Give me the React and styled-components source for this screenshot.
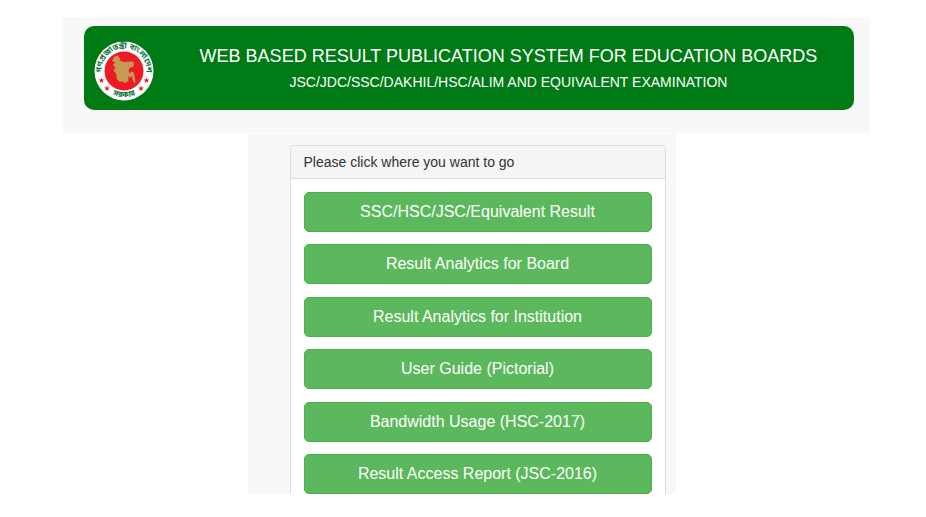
import styled, { createGlobalStyle } from 'styled-components';

const links = [
    'SSC/HSC/JSC/Equivalent Result',
    'Result Analytics for Board',
    'Result Analytics for Institution',
    'User Guide (Pictorial)',
    'Bandwidth Usage (HSC-2017)',
    'Result Access Report (JSC-2016)',
];

const stars = [
    [15, 79],
    [26, 95],
    [94, 95],
    [105, 79],
];

const Star = ({ x, y }) => (
    <path
        transform={`translate(${x} ${y})`}
        fill="#ed1c24"
        d="M0 -6 L1.5 -2 L5.7 -1.9 L2.4 0.8 L3.5 4.9 L0 2.5 L-3.5 4.9 L-2.4 0.8 L-5.7 -1.9 L-1.5 -2 Z"
    />
);

const Seal = () => (
    <SealIcon viewBox="0 0 120 120" role="img" aria-label="Government seal">
        <defs>
            <path id="seal-top" d="M18 76 A45 45 0 1 1 102 76" />
            <path id="seal-bottom" d="M14 86 A53 53 0 0 0 106 86" />
        </defs>
        <circle cx="60" cy="60" r="59" fill="#fff" />
        <circle cx="60" cy="60" r="39" fill="#ed1c24" />
        <path
            fill="#c49a55"
            d="M41 31 L48 29 L51 34 L53 40 L60 42 L78 41 L80 45 L79 51 L71 54 L69 59 L72 65 L75 61 L79 62 L82 75 L83 85 L79 82 L75 70 L71 74 L68 70 L69 80 L61 84 L56 80 L52 82 L46 77 L44 65 L39 59 L43 54 L38 47 L43 43 L36 40 Z"
        />
        <SealText>
            <textPath href="#seal-top" startOffset="50%" textAnchor="middle">গণপ্রজাতন্ত্রী বাংলাদেশ</textPath>
        </SealText>
        <SealText>
            <textPath href="#seal-bottom" startOffset="50%" textAnchor="middle">সরকার</textPath>
        </SealText>
        {stars.map(([x, y]) => (
            <Star key={x} x={x} y={y} />
        ))}
    </SealIcon>
);

const App = () => {
    return (
        <Page>
            <GlobalStyle />
            <Header>
                <Banner>
                    <Seal />
                    <Titles>
                        <Title>WEB BASED RESULT PUBLICATION SYSTEM FOR EDUCATION BOARDS</Title>
                        <Subtitle>JSC/JDC/SSC/DAKHIL/HSC/ALIM AND EQUIVALENT EXAMINATION</Subtitle>
                    </Titles>
                </Banner>
            </Header>
            <Content>
                <Panel>
                    <PanelHeading>Please click where you want to go</PanelHeading>
                    <LinkList>
                        {links.map((label) => (
                            <LinkButton key={label} href="#">{label}</LinkButton>
                        ))}
                    </LinkList>
                </Panel>
            </Content>
        </Page>
    )
}

const GlobalStyle = createGlobalStyle`
    * {
        box-sizing: border-box;
    }
    body {
        margin: 0;
        background: #fff;
        font-family: "Liberation Sans", Arial, sans-serif;
    }
`

const Page = styled.div`
    display: flex;
    flex-direction: column;
    gap: 1px;
    padding: 17px 56px 23px 63px;
`

const Header = styled.header`
    background: #f8f8f8;
    padding: 9px 16px 23px 21px;
`

const Banner = styled.div`
    display: flex;
    align-items: center;
    min-height: 84px;
    padding-left: 10px;
    background: #007a14;
    border-radius: 10px;
    color: #fff;
`

const SealIcon = styled.svg`
    flex: none;
    width: 60px;
    height: 60px;
    margin: 6px 9px 0 0;
    overflow: visible;
`

const SealText = styled.text`
    fill: #10733f;
    font-family: "Noto Sans Bengali", "Noto Sans", sans-serif;
    font-size: 16px;
    font-weight: bold;
`

const Titles = styled.div`
    flex: 1;
    text-align: center;
`

const Title = styled.h1`
    margin: 0;
    font-size: 18px;
    line-height: 28px;
    font-weight: normal;
`

const Subtitle = styled.p`
    margin: 0;
    font-size: 14px;
    line-height: 24px;
`

const Content = styled.main`
    align-self: center;
    width: 100%;
    max-width: 428px;
    margin-right: 10px;
    padding: 11px 10px 0 42px;
    background: #f8f8f8;
`

const Panel = styled.section`
    background: #fff;
    border: 1px solid #ddd;
    border-bottom: 0;
    border-radius: 4px 4px 0 0;
`

const PanelHeading = styled.h2`
    margin: 0;
    padding: 0 13px;
    background: #f5f5f5;
    border-bottom: 1px solid #ddd;
    border-radius: 3px 3px 0 0;
    color: #333;
    font-size: 14px;
    line-height: 32px;
    font-weight: normal;
`

const LinkList = styled.nav`
    display: flex;
    flex-direction: column;
    justify-content: space-between;
    min-height: 315px;
    padding: 13px 13px 0;
`

const LinkButton = styled.a`
    display: block;
    height: 40px;
    background: #5cb85c;
    border: 1px solid #4cae4c;
    border-radius: 5px;
    color: #fff;
    font-size: 16px;
    line-height: 38px;
    text-align: center;
    text-decoration: none;
`

export default App;
